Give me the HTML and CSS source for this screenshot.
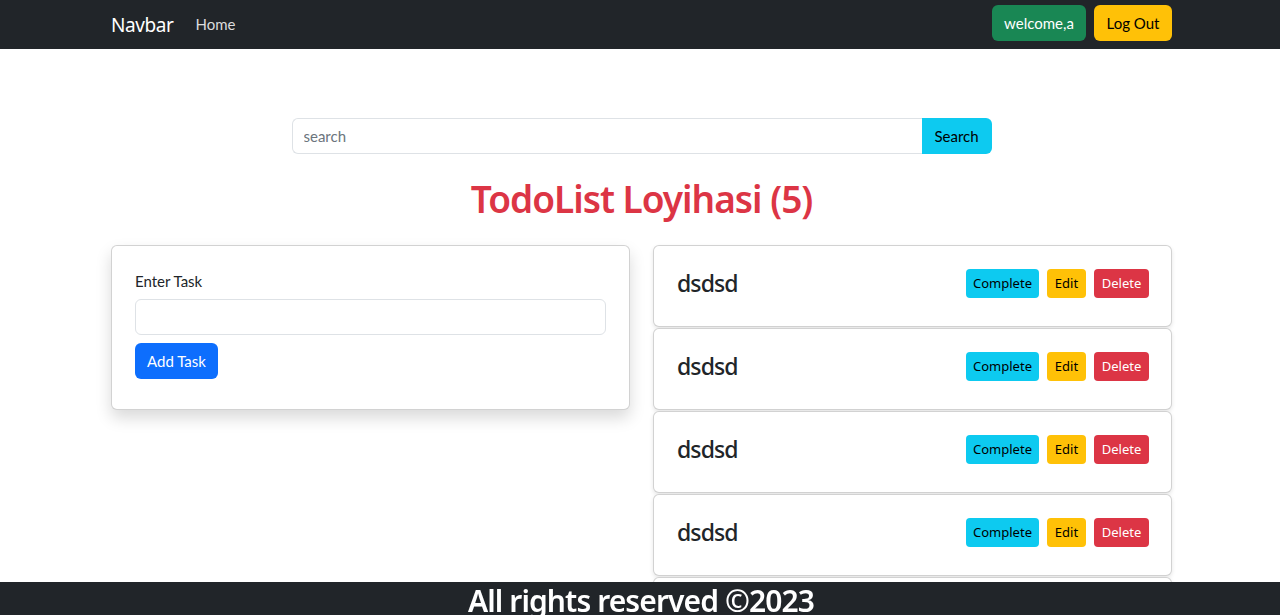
FILE: index.html
```html
<!DOCTYPE html>
<html lang="en">
<head>
<meta charset="utf-8">
<title>TodoList</title>
<link rel="stylesheet" href="styles.css">
</head>
<body>
<nav class="navbar">
  <div class="wrap nav-inner">
    <div class="nav-left">
      <a class="brand" href="#">Navbar</a>
      <a class="nav-link" href="#">Home</a>
    </div>
    <div class="nav-right">
      <button class="btn btn-success">welcome,a</button>
      <button class="btn btn-warning">Log Out</button>
    </div>
  </div>
</nav>

<main class="wrap main">
  <form class="search">
    <input class="search-input" type="text" placeholder="search">
    <button class="search-btn" type="button">Search</button>
  </form>

  <h1 class="title">TodoList Loyihasi (5)</h1>

  <div class="columns">
    <div class="col">
      <div class="card card-form">
        <label class="label">Enter Task</label>
        <input class="task-input" type="text">
        <button class="btn btn-primary add-btn" type="button">Add Task</button>
      </div>
    </div>
    <div class="col list">
      <div class="card task"><h3 class="task-name">dsdsd</h3><div class="actions"><button class="sbtn sbtn-info">Complete</button><button class="sbtn sbtn-warning">Edit</button><button class="sbtn sbtn-danger">Delete</button></div></div>
      <div class="card task"><h3 class="task-name">dsdsd</h3><div class="actions"><button class="sbtn sbtn-info">Complete</button><button class="sbtn sbtn-warning">Edit</button><button class="sbtn sbtn-danger">Delete</button></div></div>
      <div class="card task"><h3 class="task-name">dsdsd</h3><div class="actions"><button class="sbtn sbtn-info">Complete</button><button class="sbtn sbtn-warning">Edit</button><button class="sbtn sbtn-danger">Delete</button></div></div>
      <div class="card task"><h3 class="task-name">dsdsd</h3><div class="actions"><button class="sbtn sbtn-info">Complete</button><button class="sbtn sbtn-warning">Edit</button><button class="sbtn sbtn-danger">Delete</button></div></div>
      <div class="card task"><h3 class="task-name">dsdsd</h3><div class="actions"><button class="sbtn sbtn-info">Complete</button><button class="sbtn sbtn-warning">Edit</button><button class="sbtn sbtn-danger">Delete</button></div></div>
    </div>
  </div>
</main>

<footer class="footer">
  <h1 class="footer-text">All rights reserved ©2023</h1>
</footer>
</body>
</html>
```

FILE: styles.css
```css
* { box-sizing: border-box; }
html, body { margin: 0; padding: 0; }
body {
  font-family: "Lato", "Noto Sans", sans-serif;
  color: #212529;
  background: #fff;
  overflow: hidden;
  padding-left: 3px;
}
.wrap {
  width: 1061px;
  margin: 0 auto;
}
.navbar {
  background: #212529;
  height: 49px;
  margin-left: -3px;
  padding-left: 3px;
}
.nav-inner {
  height: 49px;
  display: flex;
  align-items: center;
  justify-content: space-between;
}
.nav-left { display: flex; align-items: center; gap: 22px; }
.brand {
  color: #fff;
  text-decoration: none;
  font-size: 19px;
  letter-spacing: -0.4px;
  font-family: "Noto Sans", sans-serif;
  margin-top: 1px;
}
.nav-link {
  color: rgba(255,255,255,.85);
  text-decoration: none;
  font-size: 15px;
  margin-top: -2px;
}
.nav-right { display: flex; gap: 8px; margin-top: -4px; }
.btn {
  border: 0;
  border-radius: 6px;
  height: 36px;
  padding: 0 12px;
  font-family: "Lato", sans-serif;
  font-size: 15px;
  cursor: pointer;
}
.btn-success { background: #198754; color: #fff; width: 94px; }
.btn-warning { background: #ffc107; color: #000; width: 78px; }
.btn-primary { background: #0d6efd; color: #fff; }

.main { padding-top: 69px; }
.search {
  width: 700px;
  margin: 0 auto;
  display: flex;
}
.search-input {
  flex: 1;
  height: 36px;
  border: 1px solid #dee2e6;
  border-right: 0;
  border-radius: 6px 0 0 6px;
  padding: 0 11px;
  font-family: "Lato", sans-serif;
  font-size: 15px;
  color: #212529;
}
.search-input::placeholder { color: #6c757d; }
.search-btn {
  width: 70px;
  height: 36px;
  border: 0;
  background: #0dcaf0;
  color: #000;
  border-radius: 0 6px 6px 0;
  font-family: "Lato", sans-serif;
  font-size: 15px;
}
.title {
  text-align: center;
  color: #dc3545;
  font-family: "Noto Sans", sans-serif;
  font-weight: 600;
  font-size: 37px;
  letter-spacing: -1px;
  line-height: 48px;
  margin: 21px 0 22px;
}
.columns {
  display: flex;
  gap: 23px;
  align-items: flex-start;
}
.col { flex: 1; }
.card {
  background: #fff;
  border: 1px solid rgba(0,0,0,.175);
  border-radius: 6px;
}
.card-form {
  padding: 24px 23px 30px;
  box-shadow: 0 8px 16px rgba(0,0,0,.15);
  display: flex;
  flex-direction: column;
  align-items: flex-start;
}
.label {
  font-size: 15px;
  line-height: 22px;
  margin-bottom: 7px;
}
.task-input {
  width: 100%;
  height: 36px;
  border: 1px solid #dee2e6;
  border-radius: 6px;
  margin-bottom: 8px;
}
.add-btn { width: 83px; padding: 0; }
.list { display: flex; flex-direction: column; gap: 1px; }
.task {
  height: 82px;
  padding: 0 22px 0 23px;
  display: flex;
  align-items: center;
  justify-content: space-between;
  box-shadow: 0 2px 4px rgba(0,0,0,.1);
}
.task-name {
  margin: 0;
  font-family: "Noto Sans", sans-serif;
  font-weight: 500;
  font-size: 23px;
  letter-spacing: -0.9px;
  margin-top: -6px;
}
.actions { display: flex; gap: 8px; margin-top: -6px; }
.sbtn {
  border: 0;
  border-radius: 4px;
  height: 29px;
  padding: 0;
  font-family: "Noto Sans", sans-serif;
  font-size: 13px;
}
.sbtn-info { background: #0dcaf0; color: #000; width: 73px; }
.sbtn-warning { background: #ffc107; color: #000; width: 39px; }
.sbtn-danger { background: #dc3545; color: #fff; width: 55px; }

.footer {
  position: fixed;
  left: 0;
  right: 0;
  top: 582px;
  height: 60px;
  background: #212529;
}
.footer-text {
  margin: 0;
  text-align: center;
  color: #fff;
  font-family: "Noto Sans", sans-serif;
  font-weight: 600;
  font-size: 30px;
  letter-spacing: -0.9px;
  line-height: 38px;
  transform: translateX(1px);
}
```
